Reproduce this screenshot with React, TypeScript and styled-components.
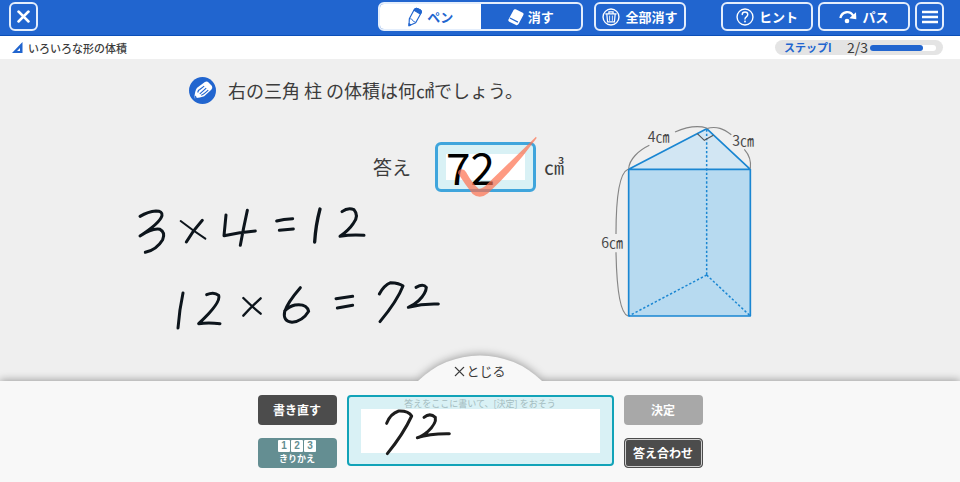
import React from "react";
import styled, { createGlobalStyle, css } from "styled-components";

const BLUE = "#2165cf";
const FONT = '"Noto Sans CJK JP", "Noto Sans", sans-serif';

const GlobalStyle = createGlobalStyle`
  *, *::before, *::after { box-sizing: border-box; }
  body { margin: 0; font-family: ${FONT}; color: #3c3c3c; background: #efefef; }
  button, input { font-family: inherit; margin: 0; padding: 0; }
  button { cursor: pointer; }
  svg { display: block; flex: none; }
`;

const Page = styled.div`
  display: flex;
  flex-direction: column;
  min-height: 100vh;
`;

const Header = styled.header`
  display: grid;
  grid-template-columns: 1fr auto auto;
  column-gap: 35px;
  align-items: start;
  height: 36px;
  padding: 2px 16px 0 9px;
  background: ${BLUE};
  border-bottom: 1px solid #0b4fb8;
`;

const Group = styled.div<{ $gap: number }>`
  display: flex;
  gap: ${(p) => p.$gap}px;
`;

const frame = css`
  border: 2px solid #e4eefc;
  border-radius: 6px;
`;

const BarButton = styled.button<{ $square?: boolean }>`
  ${frame}
  display: flex;
  align-items: center;
  justify-content: center;
  gap: 5px;
  width: ${(p) => (p.$square ? 29 : 92)}px;
  height: 29px;
  color: #fff;
  background: transparent;
  font-size: 13px;
  font-weight: 700;
  line-height: 16px;
  white-space: nowrap;
`;

const Segmented = styled.div`
  ${frame}
  display: flex;
  width: 205px;
  height: 29px;
  overflow: hidden;
`;

const Segment = styled.button<{ $active?: boolean }>`
  flex: 1;
  display: flex;
  align-items: center;
  justify-content: center;
  gap: 4px;
  border: 0;
  color: ${(p) => (p.$active ? BLUE : "#fff")};
  background: ${(p) => (p.$active ? "#fff" : "transparent")};
  font-size: 13px;
  font-weight: 700;
  line-height: 16px;
`;

const SubBar = styled.div`
  display: flex;
  align-items: center;
  justify-content: space-between;
  height: 23px;
  padding: 0 17px 0 12px;
  background: #fff;
`;

const UnitTitle = styled.h1`
  display: flex;
  align-items: center;
  gap: 5px;
  margin: 0;
  font-size: 11px;
  font-weight: 500;
  line-height: 16px;
`;

const Step = styled.div`
  display: flex;
  align-items: center;
  width: 168px;
  height: 15px;
  padding: 0 7px 0 9px;
  border-radius: 8px;
  background: #e4e4e4;
`;

const StepName = styled.span`
  flex: 1;
  color: ${BLUE};
  font-size: 11px;
  font-weight: 700;
  line-height: 15px;
`;

const StepCount = styled.span`
  margin-right: 2px;
  font-size: 14px;
  line-height: 15px;
`;

const Track = styled.div`
  width: 66px;
  height: 6px;
  border-radius: 3px;
  background: #fff;
`;

const Fill = styled.div`
  height: 6px;
  border-radius: 3px;
  background: ${BLUE};
`;

const Work = styled.main`
  flex: 1;
  padding-top: 18px;
`;

const Question = styled.div`
  display: flex;
  align-items: center;
  gap: 12px;
  height: 27px;
  padding-left: 189px;
`;

const QuestionText = styled.p`
  margin: 0;
  font-size: 18px;
  line-height: 27px;
`;

const Board = styled.div`
  display: flex;
  align-items: flex-start;
  gap: 34px;
  margin-top: 16px;
  padding-left: 130px;
`;

const Solution = styled.div`
  display: flex;
  flex-direction: column;
  width: 436px;
  padding-top: 22px;
`;

const AnswerRow = styled.div`
  display: flex;
  align-items: center;
  align-self: flex-end;
  gap: 8px;
  margin-bottom: 8px;
`;

const AnswerLabel = styled.label`
  margin-right: 16px;
  font-size: 19px;
  line-height: 28px;
`;

const AnswerBox = styled.div`
  position: relative;
  width: 101px;
  height: 50px;
  padding: 0 8px;
  border: 3px solid #3fa5dc;
  border-radius: 6px;
  background: #d9f1f5;
`;

const AnswerInput = styled.input`
  display: block;
  width: 100%;
  height: 42px;
  border: 0;
  outline: 0;
  color: #000;
  background: linear-gradient(#fff, #fff) 0 9px / 100% 26px no-repeat;
  font-size: 44px;
  line-height: 42px;
`;

const Check = styled.svg`
  position: absolute;
  left: 16px;
  top: -10px;
  pointer-events: none;
`;

const Unit = styled.span`
  padding-right: 2px;
  font-size: 20px;
  line-height: 28px;
`;

const Panel = styled.section`
  position: relative;
  display: grid;
  grid-template-columns: 79px 267px 79px;
  justify-content: center;
  column-gap: 10px;
  height: 101px;
  padding: 14px 0;
  background: #f8f8f8;
  box-shadow: 0 -1px 8px rgba(0, 0, 0, 0.35);
`;

const CloseTab = styled.button`
  position: absolute;
  left: 50%;
  bottom: 100%;
  width: 160px;
  height: 40px;
  margin-left: -80px;
  border: 0;
  overflow: hidden;
  background: transparent;
  color: #3c3c3c;
`;

const TabShape = styled.svg`
  position: absolute;
  inset: 0;
`;

const TabLabel = styled.span`
  position: relative;
  display: flex;
  align-items: center;
  justify-content: center;
  gap: 1px;
  padding-top: 20px;
  font-size: 13px;
  line-height: 20px;
`;

const Stack = styled.div`
  display: flex;
  flex-direction: column;
  gap: 13px;
`;

const tones = {
  dark: "#4c4c4c",
  teal: "#648e92",
  off: "#a8a8a8",
};

const PadButton = styled.button<{ $tone: keyof typeof tones; $ring?: boolean }>`
  display: flex;
  flex-direction: column;
  align-items: center;
  justify-content: center;
  height: 30px;
  border: ${(p) => (p.$ring ? "1px solid #4c4c4c" : "0")};
  border-radius: 4px;
  box-shadow: ${(p) => (p.$ring ? "inset 0 0 0 1px #d0d0d0" : "none")};
  color: #fff;
  background: ${(p) => tones[p.$tone]};
  font-size: 12px;
  font-weight: 700;
  line-height: 16px;
`;

const Digits = styled.span`
  display: flex;
  gap: 1px;
`;

const Digit = styled.span`
  width: 12px;
  height: 12px;
  border-radius: 1px;
  color: #648e92;
  background: #fff;
  font-family: "Liberation Sans", sans-serif;
  font-size: 10px;
  line-height: 12px;
  text-align: center;
`;

const SwitchLabel = styled.span`
  font-size: 9px;
  line-height: 14px;
`;

const Pad = styled.div`
  height: 71px;
  padding: 0 12px;
  border: 2px solid #12a3b8;
  border-radius: 4px;
  background: #d9f1f5;
`;

const PadHint = styled.p`
  margin: 0;
  padding-top: 2px;
  color: #a3bcc0;
  font-size: 9px;
  line-height: 10px;
  text-align: center;
`;

const PadArea = styled.div`
  height: 44px;
  background: #fff;
`;

const Cross = ({ size, width }: { size: number; width: number }) => (
  <svg width={size} height={size} viewBox="0 0 12 12" fill="none" stroke="currentColor" strokeWidth={width} strokeLinecap="round">
    <path d="M1.5 1.5 10.5 10.5M10.5 1.5 1.5 10.5" />
  </svg>
);

const PenIcon = () => (
  <svg width="16" height="20" viewBox="120 18 48 60" fill="none" stroke="currentColor" strokeWidth="3.5" strokeLinejoin="round">
    <path d="M126 74 127 53 141 27Q145 20 152 23L160 27Q165 31 161 38L146 65Z" />
    <path d="M127 53 134 54 138 60 146 64" strokeWidth="2.5" />
    <path d="M141 28 144 24Q148 20 153 23L160 27Q165 31 162 36L160 39Z" fill="currentColor" />
    <path d="M126 74 126 68 131 71Z" fill="currentColor" />
  </svg>
);

const EraserIcon = () => (
  <svg width="16" height="18" viewBox="419 22 50 54">
    <path d="M436 28Q438 23 443 25L465 36Q469 38 467 43L452 71Q449 76 444 74L423 64Q418 61 421 56Z" fill="#fff" />
    <path d="M425 52 450 65" stroke={BLUE} strokeWidth="4" />
  </svg>
);

const TrashIcon = () => (
  <svg width="18" height="18" viewBox="706 24 52 52" fill="none" stroke="#fff" strokeWidth="4" strokeLinecap="round">
    <circle cx="732" cy="50" r="23" />
    <path d="M717 41H747M726 40V35H738V40M720 42 722 64H742L744 42" strokeWidth="3.5" />
    <path d="M728 47V60M736 47V60" strokeWidth="2.5" />
  </svg>
);

const HelpIcon = () => (
  <svg width="18" height="18" viewBox="144 24 52 52" fill="none" stroke="#fff" strokeWidth="4" strokeLinecap="round">
    <circle cx="170" cy="50" r="23" />
    <path d="M162 43C162 33 178 33 178 43C178 50 170 49 170 56" />
    <circle cx="170" cy="63" r="1" />
  </svg>
);

const PassIcon = () => (
  <svg width="18" height="14" viewBox="450 30 54 42" fill="none">
    <path d="M454 54C459 34 483 30 493 48" stroke="#fff" strokeWidth="7" />
    <path d="M501 37 502 58 481 55Z" fill="#fff" />
    <circle cx="474" cy="63" r="7" fill="#fff" />
  </svg>
);

const MenuIcon = () => (
  <svg width="16" height="14" viewBox="0 0 16 14" stroke="#fff" strokeWidth="2.4">
    <path d="M0 2H16M0 7H16M0 12H16" />
  </svg>
);

const SetSquareIcon = () => (
  <svg width="11" height="11" viewBox="0 0 11 11">
    <path fillRule="evenodd" d="M10.5 0V11H0ZM8 6V9H5Z" fill={BLUE} />
  </svg>
);

const QuestionBadge = () => (
  <svg width="27" height="27" viewBox="567 231 80 80">
    <circle cx="607" cy="271" r="40" fill={BLUE} />
    <path d="M583 294Q584 272 591 263L614 246Q620 242 625 247L635 258Q638 264 633 269L612 288Q601 293 583 294Z" fill="#fff" />
    <path d="M594 277Q592 272 599 268L612 258M599 281 618 264M603 285Q609 284 624 270" fill="none" stroke={BLUE} strokeWidth="3.5" />
    <path d="M583 294 585 286 591 292Z" fill={BLUE} />
  </svg>
);

const Handwriting = () => (
  <svg width="315" height="135" viewBox="0 0 945 405" fill="none" stroke="#0d151c" strokeWidth="9" strokeLinecap="round" strokeLinejoin="round" role="img" aria-label="3×4=12、12×6=72">
    <g transform="translate(-30 -15)">
      <path d="M60 64Q84 50 108 48Q128 48 126 62Q120 84 60 123Q98 98 120 103Q137 112 128 134Q110 164 76 172" />
      <path d="M182 78Q218 106 256 131" strokeWidth="6" />
      <path d="M247 76Q218 108 199 141" />
      <path d="M318 60 312 122Q360 111 406 108M382 46Q370 100 361 151" />
      <path d="M470 78Q490 72 518 71M478 106 520 102" />
      <path d="M600 42Q587 90 584 141" strokeWidth="10" />
      <path d="M666 50Q684 36 702 44Q718 62 700 85Q686 106 660 124Q695 118 732 121" />
    </g>
    <g transform="translate(90 210)">
      <path d="M69 69Q58 120 54 174" />
      <path d="M140 74Q162 64 176 76Q184 98 116 161Q145 157 180 161" />
      <path d="M250 84Q272 106 302 131M302 85Q275 110 250 137" strokeWidth="7" />
      <path d="M421 53Q382 98 374 125Q368 154 396 157Q428 154 446 124Q440 100 405 105Q385 110 374 123" />
      <path d="M528 86 578 79M532 114 578 106" />
      <path d="M658 72Q672 46 692 38Q718 39 729 48Q712 92 660 155" />
      <path d="M768 52Q790 40 799 52Q798 70 776 92Q764 104 745 112Q790 100 835 102" />
    </g>
  </svg>
);

const PadWriting = () => (
  <svg width="240" height="44" viewBox="363 207 720 132" overflow="visible" fill="none" stroke="#1d1d1d" strokeWidth="9" strokeLinecap="round" strokeLinejoin="round" role="img" aria-label="72">
    <path d="M440 250Q451 221 476 213Q506 212 515 228Q490 282 442 341" />
    <path d="M552 232Q570 217 586 232Q590 250 562 276Q546 290 532 293Q570 280 628 281" />
  </svg>
);

const FigureText = styled.text`
  font-size: 42px;
  fill: #4a4a4a;
`;

const Prism = () => (
  <svg width="155" height="202" viewBox="30 30 465 606" role="img" aria-label="三角柱">
    <path d="M350 56 481 178H116Z" fill="#d2e6f3" />
    <path d="M116 178H481V618H116Z" fill="#b7daf0" />
    <g fill="none" stroke="#1a86d2" strokeWidth="5" strokeLinejoin="round">
      <path d="M350 56 481 178V618H116V178ZM116 178H481" />
      <path d="M350 58V495M350 495 116 618M350 495 481 618" strokeWidth="4.5" strokeDasharray="7 6" />
    </g>
    <g fill="none" stroke="#858585" strokeWidth="3.5">
      <path d="M116 176C118 148 145 122 178 106M255 66Q310 42 350 54" />
      <path d="M350 56C380 46 402 58 424 74M463 118C478 135 484 155 481 176" />
      <path d="M114 178C85 190 78 290 78 372M78 427C80 530 88 610 114 618" />
      <path d="M322 71 343 91 370 76" stroke="#555" />
    </g>
    <FigureText x="173" y="95">4㎝</FigureText>
    <FigureText x="427" y="109">3㎝</FigureText>
    <FigureText x="34" y="413">6㎝</FigureText>
  </svg>
);

export default function App() {
  const progress = 80;
  return (
    <Page>
      <GlobalStyle />
      <Header>
        <BarButton $square aria-label="とじる"><Cross size={13} width={2.6} /></BarButton>
        <Group $gap={11}>
          <Segmented>
            <Segment $active><PenIcon />ペン</Segment>
            <Segment><EraserIcon />消す</Segment>
          </Segmented>
          <BarButton><TrashIcon />全部消す</BarButton>
        </Group>
        <Group $gap={5}>
          <BarButton><HelpIcon />ヒント</BarButton>
          <BarButton><PassIcon />パス</BarButton>
          <BarButton $square aria-label="メニュー"><MenuIcon /></BarButton>
        </Group>
      </Header>

      <SubBar>
        <UnitTitle><SetSquareIcon />いろいろな形の体積</UnitTitle>
        <Step>
          <StepName>ステップI</StepName>
          <StepCount>2/3</StepCount>
          <Track><Fill style={{ width: `${progress}%` }} /></Track>
        </Step>
      </SubBar>

      <Work>
        <Question>
          <QuestionBadge />
          <QuestionText>右の三角 柱 の体積は何㎤でしょう。</QuestionText>
        </Question>
        <Board>
          <Solution>
            <AnswerRow>
              <AnswerLabel htmlFor="answer">答え</AnswerLabel>
              <AnswerBox>
                <AnswerInput id="answer" readOnly value="72" />
                <Check width="84" height="63" viewBox="282 45 252 189">
                  <path d="M294 160Q294 149 305 148Q314 148 318 156Q338 192 356 206Q368 208 384 190L528 50 530 54Q462 148 384 220Q360 240 338 222Q314 192 294 160Z" fill="#fd6f4d" fillOpacity="0.7" />
                </Check>
              </AnswerBox>
              <Unit>㎤</Unit>
            </AnswerRow>
            <Handwriting />
          </Solution>
          <Prism />
        </Board>
      </Work>

      <Panel>
        <CloseTab>
          <TabShape width="160" height="40" viewBox="0 0 160 40">
            <path d="M18 40A88 88 0 0 1 142 40Z" fill="#f8f8f8" filter="drop-shadow(0 -1px 4px rgba(0,0,0,0.35))" />
          </TabShape>
          <TabLabel><Cross size={11} width={1.5} />とじる</TabLabel>
        </CloseTab>
        <Stack>
          <PadButton $tone="dark">書き直す</PadButton>
          <PadButton $tone="teal">
            <Digits><Digit>1</Digit><Digit>2</Digit><Digit>3</Digit></Digits>
            <SwitchLabel>きりかえ</SwitchLabel>
          </PadButton>
        </Stack>
        <Pad>
          <PadHint>答えをここに書いて、[決定] をおそう</PadHint>
          <PadArea><PadWriting /></PadArea>
        </Pad>
        <Stack>
          <PadButton $tone="off">決定</PadButton>
          <PadButton $tone="dark" $ring>答え合わせ</PadButton>
        </Stack>
      </Panel>
    </Page>
  );
}
